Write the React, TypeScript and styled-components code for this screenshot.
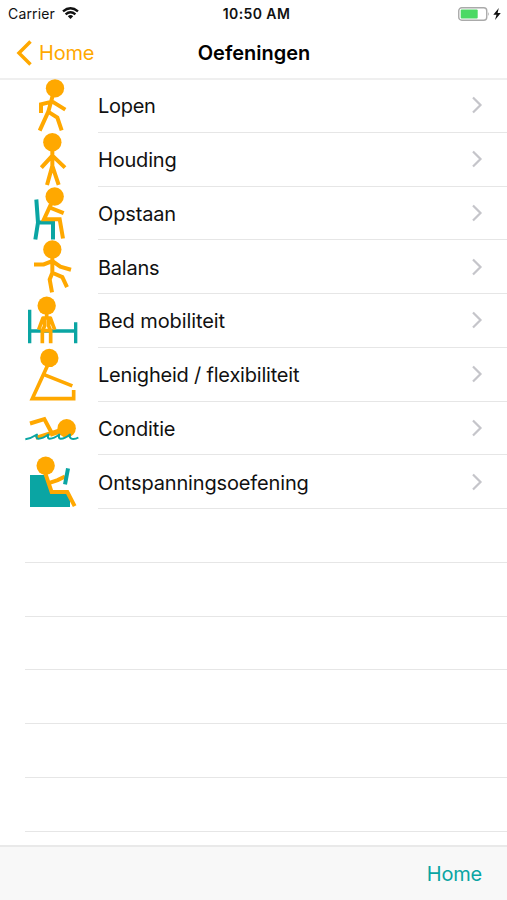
import React from "react";
import styled, { createGlobalStyle } from "styled-components";

const ORANGE = "#ffa800";
const TEAL = "#0aa5a3";

const GlobalStyle = createGlobalStyle`
  body { margin: 0; background: #fff; }
  * { box-sizing: border-box; }
`;

const Screen = styled.div`
  width: 507px;
  height: 900px;
  display: flex;
  flex-direction: column;
  overflow: hidden;
  background: #fff;
  color: #111;
  font-family: Inter, "Liberation Sans", sans-serif;
`;

const StatusBar = styled.header`
  height: 27px;
  flex: none;
  display: grid;
  grid-template-columns: 1fr auto 1fr;
  align-items: center;
  padding: 0 6px 0 8px;
  font-size: 14px;
  line-height: 26px;
`;

const Carrier = styled.div`
  display: flex;
  align-items: center;
  gap: 7px;
  letter-spacing: 0.15px;
`;

const Clock = styled.div`
  font-size: 14px;
  font-weight: 600;
  letter-spacing: 0.4px;
  margin-left: 4px;
`;

const Power = styled.div`
  display: flex;
  align-items: center;
  justify-content: flex-end;
  gap: 3px;
`;

const NavBar = styled.nav`
  height: 53px;
  flex: none;
  display: grid;
  grid-template-columns: 1fr auto 1fr;
  align-items: center;
  padding: 0 16px;
  border-bottom: 2px solid #efefef;
`;

const BackButton = styled.a`
  display: flex;
  align-items: center;
  gap: 7px;
  color: ${ORANGE};
  font-size: 20px;
  letter-spacing: -0.2px;
`;

const Title = styled.h1`
  margin: 0 0 0 1px;
  font-size: 20px;
  font-weight: 600;
  letter-spacing: 0;
  color: #000;
`;

const List = styled.ul`
  flex: 1;
  min-height: 0;
  overflow: hidden;
  margin: -1px 0 0;
  padding: 0;
  list-style: none;
`;

const Row = styled.li`
  height: 53.75px;
  display: flex;
  padding-left: 24px;
`;

const Figure = styled.svg`
  width: 56px;
  height: 53.75px;
  flex: none;
  overflow: visible;
  fill: none;
  stroke: ${ORANGE};
  stroke-width: 12;
  stroke-linejoin: miter;
`;

const RowBody = styled.div`
  flex: 1;
  margin-left: 18px;
  padding: 2px 24px 0 0;
  display: flex;
  align-items: center;
  justify-content: space-between;
  border-bottom: 1px solid #e6e6e6;
`;

const Label = styled.span<{ $spacing: number }>`
  font-size: 20px;
  letter-spacing: ${(p) => p.$spacing}px;
`;

const Chevron = styled.svg`
  width: 12px;
  height: 18px;
  margin-bottom: 2px;
  fill: none;
  stroke: #c5c5ca;
  stroke-width: 2.2;
`;

const EmptyRow = styled.li`
  height: 53.75px;
  margin-left: 25px;
  border-bottom: 1px solid #e6e6e6;
`;

const Toolbar = styled.footer`
  height: 55px;
  flex: none;
  display: flex;
  align-items: center;
  justify-content: flex-end;
  padding: 0 25px 0 0;
  border-top: 2px solid #e9e9e9;
  background: #f8f8f8;
`;

const ToolbarButton = styled.a`
  color: ${TEAL};
  font-size: 20px;
  letter-spacing: -0.2px;
`;

const Head = ({ x, y }: { x: number; y: number }) => (
  <circle cx={x} cy={y} r="27.5" fill={ORANGE} stroke="none" />
);

interface Exercise {
  label: string;
  spacing: number;
  top: number;
  art: React.ReactNode;
}

const exercises: Exercise[] = [
  {
    label: "Lopen",
    spacing: -0.3,
    top: 12,
    art: (
      <>
        <Head x={120} y={40} />
        <path d="M113 62L100 110L74 167M78 114V88L112 80L151 104M99 110L127 128L140 166" />
      </>
    ),
  },
  {
    label: "Houding",
    spacing: -0.2,
    top: 173.25,
    art: (
      <>
        <Head x={112} y={201} />
        <path d="M112 224V278M79 277L112 241L150 277M96 329L112 272L131 329" />
      </>
    ),
  },
  {
    label: "Opstaan",
    spacing: -0.15,
    top: 10.5,
    art: (
      <>
        <path stroke={TEAL} d="M64 48L69 117L61 168M65 117H114V168" />
        <Head x={119} y={39} />
        <path d="M108 62L87 107H134L144 165M104 72L146 89" />
      </>
    ),
  },
  {
    label: "Balans",
    spacing: -0.25,
    top: 171.75,
    art: (
      <>
        <Head x={112} y={200} />
        <path d="M112 222V270L104 290L111 329M57 245H86L112 235L136 252L168 261M112 270L142 283L156 313" />
      </>
    ),
  },
  {
    label: "Bed mobiliteit",
    spacing: -0.1,
    top: 12,
    art: (
      <>
        <path stroke={TEAL} strokeWidth="10" d="M44 59V160M182 97V160M44 123H182" />
        <Head x={95} y={47} />
        <path
          strokeWidth="11"
          strokeLinejoin="round"
          d="M95 70V82M71 119L84 84H106L119 119M82 160V122L89 108V84M107 160V122L101 108V84M82 122H107"
        />
      </>
    ),
  },
  {
    label: "Lenigheid / flexibiliteit",
    spacing: -0.2,
    top: 173.25,
    art: (
      <>
        <Head x={103} y={203} />
        <path strokeWidth="11" d="M98 225L52 325H176V299M87 253L172 287" />
      </>
    ),
  },
  {
    label: "Conditie",
    spacing: -0.15,
    top: 4.5,
    art: (
      <>
        <path d="M45 69L88 56L110 97L62 112" />
        <path d="M105 101L132 92" strokeWidth="16" />
        <Head x={155} y={83} />
        <path
          stroke={TEAL}
          strokeWidth="6"
          strokeLinejoin="round"
          d="M31 116Q48 114 66 102Q62 114 70 115Q84 114 100 102Q96 114 104 115Q117 114 133 102Q129 114 137 115Q150 114 165 102Q162 113 171 115Q182 116 190 111"
        />
      </>
    ),
  },
  {
    label: "Ontspanningsoefening",
    spacing: -0.15,
    top: 165.75,
    art: (
      <>
        <path fill={TEAL} stroke="none" d="M45 226H88L108 280H156L165 296V322H45Z" />
        <Head x={92} y={198} />
        <path d="M91 221L110 277H157L179 319M101 250L128 241L150 230" />
        <path stroke={TEAL} d="M159 206L150 254" />
      </>
    ),
  },
];

export default function App() {
  return (
    <Screen>
      <GlobalStyle />
      <StatusBar>
        <Carrier>
          <span>Carrier</span>
          <svg width="17" height="13" viewBox="0 0 17 13" fill="none" stroke="#111" strokeWidth="2.4">
            <path d="M1 4.4Q8.5 -1.8 16 4.4M3.6 7.3Q8.5 3.2 13.4 7.3" />
            <path d="M5.8 9.2Q8.5 7 11.2 9.2L8.5 12Z" fill="#111" stroke="none" />
          </svg>
        </Carrier>
        <Clock>10:50 AM</Clock>
        <Power>
          <svg width="32" height="14" viewBox="0 0 32 14">
            <rect x=".75" y=".75" width="28" height="12.5" rx="3" fill="#fff" stroke="#aaa" strokeWidth="1.4" />
            <rect x="2.7" y="2.5" width="17" height="9" rx="1" fill="#4cd964" />
            <path d="M30.2 5Q32 7 30.2 9Z" fill="#aaa" />
          </svg>
          <svg width="8" height="12" viewBox="0 0 8 12">
            <path d="M5.8 0L.3 6.7H3.5L2 12L7.8 5H4.6Z" fill="#111" />
          </svg>
        </Power>
      </StatusBar>
      <NavBar>
        <BackButton>
          <svg width="16" height="26" viewBox="0 0 16 26" fill="none" stroke={ORANGE} strokeWidth="3.5">
            <path d="M14.5 1.5L3 13L14.5 24.5" />
          </svg>
          <span>Home</span>
        </BackButton>
        <Title>Oefeningen</Title>
      </NavBar>
      <List>
        {exercises.map((e) => (
          <Row key={e.label}>
            <Figure viewBox={`27 ${e.top} 168 161.25`}>{e.art}</Figure>
            <RowBody>
              <Label $spacing={e.spacing}>{e.label}</Label>
              <Chevron viewBox="0 0 12 18">
                <path d="M2 1.5L9.5 9L2 16.5" />
              </Chevron>
            </RowBody>
          </Row>
        ))}
        {Array.from({ length: 6 }, (_, i) => (
          <EmptyRow key={i} />
        ))}
      </List>
      <Toolbar>
        <ToolbarButton>Home</ToolbarButton>
      </Toolbar>
    </Screen>
  );
}
